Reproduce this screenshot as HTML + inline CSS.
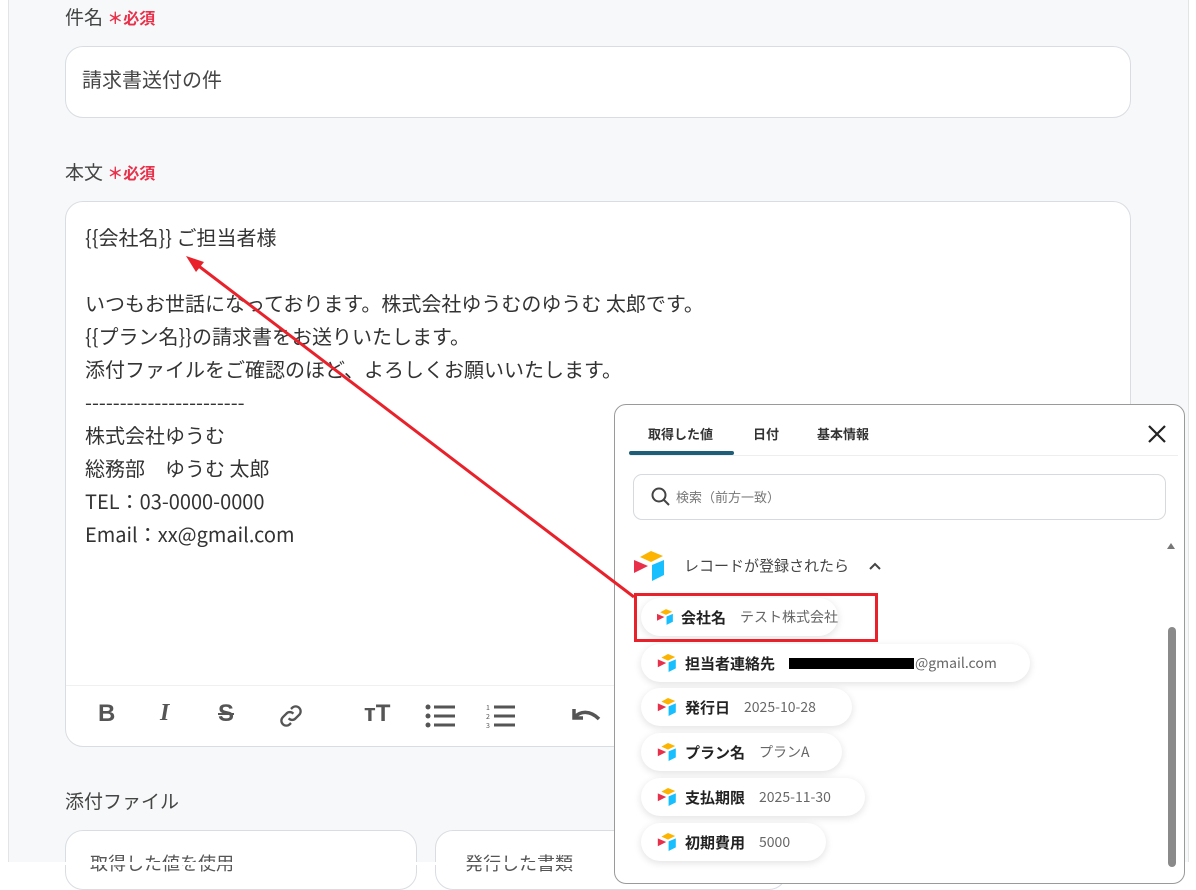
<!DOCTYPE html>
<html><head><meta charset="utf-8"><style>
*{margin:0;padding:0;box-sizing:border-box}
body{width:1196px;height:865px;overflow:hidden;background:#fff;font-family:"Noto Sans CJK JP","Liberation Sans",sans-serif;color:#333;position:relative}
.page{position:absolute;left:8px;top:0;width:1181px;height:862px;background:#f7f8f9;border-left:1px solid #e2e4e6;border-right:1px solid #e2e4e6}
.abs{position:absolute}
.lbl{font-size:19px;color:#444}
.req{color:#e8304a;font-size:16px;font-weight:bold}
.box{background:#fff;border:1px solid #d9dde2;border-radius:18px}
.body{font-size:20px;line-height:33px;color:#333;white-space:pre}
.tb{font-size:24px;color:#555;font-weight:bold}
.pop{left:614px;top:404px;width:571px;height:480px;background:#fff;border:1.5px solid #9a9a9a;border-radius:12px}
.pill{position:absolute;left:641px;height:38px;border-radius:19px;background:#fff;box-shadow:0 2px 8px rgba(0,0,0,.12);font-size:15px;display:flex;align-items:center;padding-left:16px;white-space:nowrap}
.pill b{color:#222;margin-left:6px;margin-right:14px}
.pill span{color:#666;font-size:14px}
</style></head><body>
<div class="page"></div>
<div class="abs lbl" style="left:65px;top:3px">件名 <span class="req">＊必須</span></div>
<div class="abs box" style="left:65px;top:46px;width:1066px;height:72px"></div>
<div class="abs" style="left:82px;top:64px;font-size:20px;color:#444">請求書送付の件</div>
<div class="abs lbl" style="left:65px;top:158px">本文 <span class="req">＊必須</span></div>
<div class="abs box" style="left:65px;top:201px;width:1066px;height:546px"></div>
<div class="abs" style="left:66px;top:685px;width:1064px;border-top:1px solid #eef0f2"></div>
<div class="abs body" style="left:85px;top:220px">{{会社名}} ご担当者様

いつもお世話になっております。株式会社ゆうむのゆうむ 太郎です。
{{プラン名}}の請求書をお送りいたします。
添付ファイルをご確認のほど、よろしくお願いいたします。
-----------------------
株式会社ゆうむ
総務部　ゆうむ 太郎
TEL：03-0000-0000
Email：xx@gmail.com</div>
<div class="abs tb" style="left:98px;top:700px;font-family:'Liberation Sans'">B</div>
<div class="abs tb" style="left:160px;top:700px;font-style:italic;font-family:'Liberation Serif'">I</div>
<div class="abs tb" style="left:218px;top:700px;text-decoration:line-through;font-family:'Liberation Sans'">S</div>
<svg class="abs" style="left:277px;top:702px" width="28" height="28" viewBox="0 0 24 24" fill="none" stroke="#555" stroke-width="2"><path d="M10 14a4 4 0 0 0 6 0l3-3a4 4 0 0 0-6-6l-1 1M14 10a4 4 0 0 0-6 0l-3 3a4 4 0 0 0 6 6l1-1"/></svg>
<div class="abs tb" style="left:364px;top:700px;font-family:'Liberation Sans'">ᴛT</div>
<svg class="abs" style="left:424px;top:703px" width="32" height="26" viewBox="0 0 32 26" fill="#555"><circle cx="4" cy="4" r="2.5"/><circle cx="4" cy="13" r="2.5"/><circle cx="4" cy="22" r="2.5"/><rect x="10" y="2.5" width="21" height="3"/><rect x="10" y="11.5" width="21" height="3"/><rect x="10" y="20.5" width="21" height="3"/></svg>
<svg class="abs" style="left:486px;top:703px" width="30" height="26" viewBox="0 0 30 26" fill="#555"><text x="0" y="7" font-size="7">1</text><text x="0" y="16" font-size="7">2</text><text x="0" y="25" font-size="7">3</text><rect x="8" y="2.5" width="21" height="3"/><rect x="8" y="11.5" width="21" height="3"/><rect x="8" y="20.5" width="21" height="3"/></svg>
<svg class="abs" style="left:570px;top:705px" width="32" height="22" viewBox="0 0 32 22" fill="none" stroke="#555" stroke-width="3.5"><path d="M4 4v9h9M5 12c5-6 15-7 24 2"/></svg>
<div class="abs lbl" style="left:65px;top:787px">添付ファイル</div>
<div class="abs box" style="left:65px;top:830px;width:352px;height:60px"></div>
<div class="abs box" style="left:435px;top:830px;width:352px;height:60px"></div>
<div class="abs" style="left:90px;top:850px;font-size:18px;color:#555">取得した値を使用</div>
<div class="abs" style="left:465px;top:850px;font-size:18px;color:#555">発行した書類</div>
<div class="abs" style="left:0;top:862px;width:1196px;height:3px;background:#fff"></div>

<div class="abs pop"></div>
<div class="abs" style="left:648px;top:424px;font-size:13px;font-weight:bold;color:#333">取得した値</div>
<div class="abs" style="left:753px;top:424px;font-size:13px;font-weight:bold;color:#333">日付</div>
<div class="abs" style="left:817px;top:424px;font-size:13px;font-weight:bold;color:#333">基本情報</div>
<div class="abs" style="left:630px;top:455px;width:548px;border-top:1px solid #eceef0"></div>
<div class="abs" style="left:629px;top:451px;width:105px;height:4px;background:#1f5e78;border-radius:2px"></div>
<svg class="abs" style="left:1147px;top:424px" width="20" height="20" viewBox="0 0 20 20" stroke="#222" stroke-width="2.2"><path d="M2 2l16 16M18 2L2 18"/></svg>
<div class="abs" style="left:633px;top:474px;width:533px;height:46px;border:1px solid #d6d9dd;border-radius:9px"></div>
<svg class="abs" style="left:651px;top:487px" width="20" height="20" viewBox="0 0 20 20" fill="none" stroke="#444" stroke-width="2"><circle cx="8" cy="8" r="6.5"/><path d="M13 13l5 5"/></svg>
<div class="abs" style="left:676px;top:487px;font-size:13px;color:#777">検索（前方一致）</div>
<svg class="abs" style="left:634px;top:551px" width="34" height="30" viewBox="0 0 34 30"><polygon points="6,6 17,0 29,5 17,11" fill="#fcb400"/><polygon points="18,14 30,9 30,24 18,30" fill="#18bfff"/><polygon points="0,9 14,15 0,22" fill="#e8304a"/></svg>
<div class="abs" style="left:684px;top:555px;font-size:15px;color:#444">レコードが登録されたら</div>
<svg class="abs" style="left:868px;top:561px" width="14" height="10" viewBox="0 0 14 10" fill="none" stroke="#444" stroke-width="2"><path d="M2 8l5-5 5 5"/></svg>
<div class="abs" style="left:1167px;top:543px;width:0;height:0;border-left:4px solid transparent;border-right:4px solid transparent;border-bottom:6px solid #777"></div>
<div class="abs" style="left:1168px;top:627px;width:8px;height:240px;background:#8a8a8a;border-radius:4px"></div>

<div class="pill" style="top:598px;width:197px"><svg width="22" height="18" viewBox="0 0 34 30"><polygon points="6,6 17,0 29,5 17,11" fill="#fcb400"/><polygon points="18,14 30,9 30,24 18,30" fill="#18bfff"/><polygon points="0,9 14,15 0,22" fill="#e8304a"/></svg><b>会社名</b><span>テスト株式会社</span></div>
<div class="pill" style="top:644px;width:389px"><svg width="22" height="18" viewBox="0 0 34 30"><polygon points="6,6 17,0 29,5 17,11" fill="#fcb400"/><polygon points="18,14 30,9 30,24 18,30" fill="#18bfff"/><polygon points="0,9 14,15 0,22" fill="#e8304a"/></svg><b>担当者連絡先</b><span style="display:inline-block;width:125px;height:11px;background:#000;margin-right:1px"></span><span>@gmail.com</span></div>
<div class="pill" style="top:688px;width:211px"><svg width="22" height="18" viewBox="0 0 34 30"><polygon points="6,6 17,0 29,5 17,11" fill="#fcb400"/><polygon points="18,14 30,9 30,24 18,30" fill="#18bfff"/><polygon points="0,9 14,15 0,22" fill="#e8304a"/></svg><b>発行日</b><span>2025-10-28</span></div>
<div class="pill" style="top:733px;width:201px"><svg width="22" height="18" viewBox="0 0 34 30"><polygon points="6,6 17,0 29,5 17,11" fill="#fcb400"/><polygon points="18,14 30,9 30,24 18,30" fill="#18bfff"/><polygon points="0,9 14,15 0,22" fill="#e8304a"/></svg><b>プラン名</b><span>プランA</span></div>
<div class="pill" style="top:778px;width:224px"><svg width="22" height="18" viewBox="0 0 34 30"><polygon points="6,6 17,0 29,5 17,11" fill="#fcb400"/><polygon points="18,14 30,9 30,24 18,30" fill="#18bfff"/><polygon points="0,9 14,15 0,22" fill="#e8304a"/></svg><b>支払期限</b><span>2025-11-30</span></div>
<div class="pill" style="top:823px;width:185px"><svg width="22" height="18" viewBox="0 0 34 30"><polygon points="6,6 17,0 29,5 17,11" fill="#fcb400"/><polygon points="18,14 30,9 30,24 18,30" fill="#18bfff"/><polygon points="0,9 14,15 0,22" fill="#e8304a"/></svg><b>初期費用</b><span>5000</span></div>

<div class="abs" style="left:634px;top:593px;width:244px;height:49px;border:3px solid #e8212b"></div>
<svg class="abs" style="left:0;top:0" width="1196" height="865"><line x1="634" y1="597" x2="196" y2="264" stroke="#e8212b" stroke-width="3"/><polygon points="186,256 204,262 196,272" fill="#e8212b"/></svg>
</body></html>
